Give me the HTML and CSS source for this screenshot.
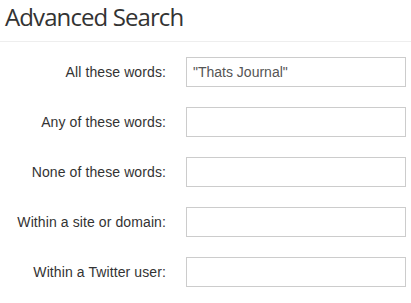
FILE: index.html
```html
<!DOCTYPE html>
<html>
<head>
<meta charset="utf-8">
<link rel="stylesheet" href="styles.css">
</head>
<body>
<div class="page">
  <h1 class="title">Advanced Search</h1>
  <form class="form">
    <div class="row"><label class="label">All these words:</label><input class="field" type="text" value="&quot;Thats Journal&quot;"></div>
    <div class="row"><label class="label">Any of these words:</label><input class="field" type="text"></div>
    <div class="row"><label class="label">None of these words:</label><input class="field" type="text"></div>
    <div class="row"><label class="label">Within a site or domain:</label><input class="field" type="text"></div>
    <div class="row"><label class="label">Within a Twitter user:</label><input class="field" type="text"></div>
  </form>
</div>
</body>
</html>
```
FILE: styles.css
```css
html, body {
  margin: 0;
  padding: 0;
  background: #fff;
}
.page {
  width: 411px;
}
.title {
  margin: 0;
  padding: 0 0 0 5px;
  height: 41px;
  line-height: 34px;
  font-family: "Open Sans", sans-serif;
  font-weight: 400;
  font-size: 24px;
  letter-spacing: -0.9px;
  color: #333;
  border-bottom: 1px solid #eee;
}
.form {
  margin: 0;
  padding: 15px 0 0 0;
  display: flex;
  flex-direction: column;
  gap: 20px;
}
.row {
  display: flex;
  align-items: center;
  height: 30px;
}
.label {
  width: 166px;
  text-align: right;
  font-family: "Liberation Sans", Arial, sans-serif;
  font-size: 14px;
  letter-spacing: 0.1px;
  color: #333;
}
.field {
  box-sizing: border-box;
  margin-left: 20px;
  width: 220px;
  height: 30px;
  border: 1px solid #ccc;
  border-radius: 0;
  padding: 0 6px;
  font-family: "Liberation Sans", Arial, sans-serif;
  font-size: 14px;
  color: #555;
  background: #fff;
  outline: none;
}
```
